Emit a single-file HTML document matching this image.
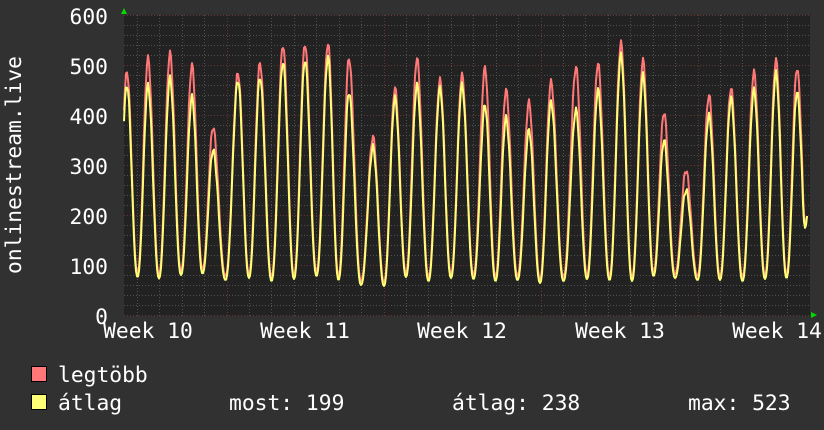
<!DOCTYPE html>
<html><head><meta charset="utf-8"><style>
html,body{margin:0;padding:0;background:#333;}
body{width:824px;height:430px;overflow:hidden;}
svg{display:block;}
text{font-family:"DejaVu Sans Mono","Liberation Mono",monospace;font-size:21.3px;fill:#fff;}
</style></head><body>
<svg id="g" width="824" height="430" xmlns="http://www.w3.org/2000/svg">
<rect width="824" height="430" fill="#313131"/>
<rect x="124" y="15" width="686" height="301" fill="#222"/>
<g id="grid"></g>
<path id="red" fill="none" stroke="#ff7777" stroke-width="2" stroke-linejoin="round"/>
<path id="yel" fill="none" stroke="#ffff77" stroke-width="2" stroke-linejoin="round"/>
<polygon points="121,14 127,14 124,8" fill="#00dd00"/>
<polygon points="811,312 811,318 817,315" fill="#00dd00"/>
<g text-anchor="end">
<text x="108" y="24">600</text><text x="108" y="74">500</text><text x="108" y="124">400</text>
<text x="108" y="174">300</text><text x="108" y="224">200</text><text x="108" y="274">100</text>
<text x="108" y="324">0</text></g>
<g text-anchor="middle">
<text x="148" y="338">Week 10</text><text x="305" y="338">Week 11</text><text x="462" y="338">Week 12</text>
<text x="620" y="338">Week 13</text><text x="777" y="338">Week 14</text></g>
<text transform="translate(21,165) rotate(-90)" text-anchor="middle">onlinestream.live</text>
<rect x="31.5" y="366.5" width="15" height="15" fill="#ff7777" stroke="#000"/>
<rect x="31.5" y="394.5" width="15" height="15" fill="#ffff77" stroke="#000"/>
<text x="58" y="382">legtöbb</text>
<text x="58" y="410">átlag</text>
<text x="229" y="410">most: 199</text>
<text x="452" y="410">átlag: 238</text>
<text x="688" y="410">max: 523</text>
</svg>
<script>
var ns="http://www.w3.org/2000/svg",g=document.getElementById('grid');
function ln(x1,y1,x2,y2,c){var l=document.createElementNS(ns,'line');l.setAttribute('x1',x1);l.setAttribute('y1',y1);l.setAttribute('x2',x2);l.setAttribute('y2',y2);l.setAttribute('stroke',c);l.setAttribute('stroke-width',1);l.setAttribute('stroke-dasharray','1,2');g.appendChild(l);}
for(var v=0;v<=600;v+=20){var y=316-v/2-0.5;ln(124,y,810,y,v%100==0?'#6a3535':'#505050');}
for(var i=-4;i<32;i++){var x=Math.round(226.5+i*22.43)+0.5;if(x<124||x>810)continue;ln(x,15,x,316,(i%7==0)?'#6a3535':'#505050');}
var P=[[104,420,380],[127,488,462],[148,516,462],[170,526,476],[192,502,438],[213,378,332],[238,486,472],[260,506,478],[283,542,508],[305,544,512],[328,546,518],[349,516,448],[373,358,338],[395,456,436],[417,516,462],[440,472,456],[462,482,462],[485,496,422],[506,452,396],[529,428,372],[551,468,428],[576,498,412],[598,506,452],[621,546,522],[643,512,482],[664,408,352],[686,292,252],[709,442,402],[731,456,436],[754,488,452],[776,512,486],[797,496,448],[820,480,440]];
var lows=[80,78,75,82,85,72,76,70,74,80,72,62,60,78,70,76,74,70,72,66,70,74,72,70,80,76,72,72,70,74,76,78];
function val(x,k){for(var i=0;i<P.length-1;i++){if(x>=P[i][0]&&x<=P[i+1][0]){var a=P[i],b=P[i+1],t=(x-a[0])/(b[0]-a[0]),lo=lows[i]+(k==2?0:8);
var pk=t<0.5?a[k]:b[k],f=Math.pow((1+Math.cos(t*2*Math.PI))/2,1.15);
var n=Math.sin(x*1.7+k)*6*f;return lo+(pk-lo)*f+n;}}return 200;}
function build(k){var d='';for(var x=124;x<=807;x+=1){var v=val(x,k);if(x>=803){v=v+(200-v)*(x-802)/5;}d+=(x==124?'M':'L')+x+','+(316-v/2).toFixed(1);}return d;}
document.getElementById('red').setAttribute('d',build(1));
document.getElementById('yel').setAttribute('d',build(2));
</script>
</body></html>
